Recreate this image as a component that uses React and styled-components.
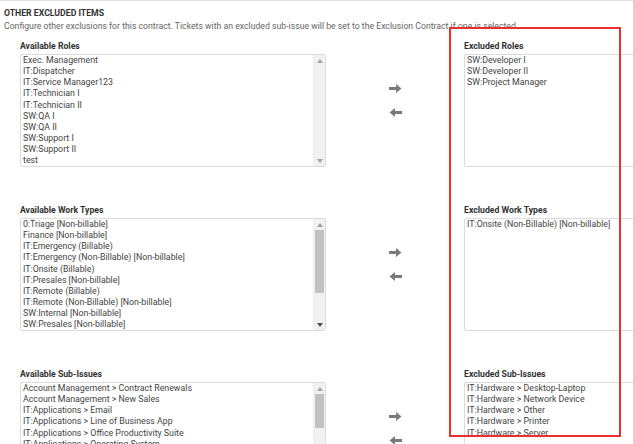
import React from 'react';
import styled, { createGlobalStyle } from 'styled-components';

const GlobalStyle = createGlobalStyle`
  body {
    margin: 0;
    background: #fff;
    font-family: Roboto, "Liberation Sans", sans-serif;
    overflow: hidden;
  }
`;

const Page = styled.div`
  position: relative;
  width: 633px;
  height: 444px;
  overflow: hidden;
  border-top: 1px solid #e2e2e2;
  box-sizing: border-box;
`;

const Header = styled.div`
  padding: 7px 4px 0;
`;

const Title = styled.div`
  font-size: 8.7px;
  font-weight: 700;
  color: #333;
  line-height: 11px;
`;

const Desc = styled.div`
  font-size: 8.7px;
  color: #666;
  line-height: 11px;
  margin-top: 2px;
  white-space: nowrap;
`;

const Sections = styled.div`
  display: flex;
  flex-direction: column;
  gap: 38px;
  padding: 9px 0 0 20px;
`;

const Row = styled.div`
  display: grid;
  grid-template-columns: 306px 138px 306px;
`;

const Field = styled.div`
  display: flex;
  flex-direction: column;
`;

const Label = styled.div`
  font-size: 8.7px;
  font-weight: 700;
  color: #333;
  line-height: 11px;
  margin-bottom: 2px;
`;

const Box = styled.div`
  display: flex;
  height: 113px;
  border: 1px solid #dcdcdc;
  border-radius: 2px;
  box-sizing: border-box;
  background: #fff;
  overflow: hidden;
`;

const Items = styled.div`
  flex: 1;
  padding: 0 2px;
  font-size: 8.8px;
  line-height: 11.15px;
  color: #444;
  white-space: nowrap;
  overflow: hidden;
`;

const Track = styled.div`
  width: 11px;
  display: flex;
  flex-direction: column;
  background: #f1f1f1;
  border-left: 1px solid #ececec;
`;

const ScrollBtn = styled.div`
  height: 11px;
  display: flex;
  align-items: center;
  justify-content: center;
  color: ${p => (p.$active ? '#505050' : '#a3a3a3')};
`;

const ThumbArea = styled.div`
  flex: 1;
  display: flex;
  flex-direction: column;
`;

const Thumb = styled.div`
  margin: 0 1px;
  background: #c1c1c1;
`;

const Arrows = styled.div`
  display: flex;
  flex-direction: column;
  align-items: center;
  gap: 15px;
  padding-top: 43px;
`;

const Highlight = styled.div`
  position: absolute;
  left: 449px;
  top: 26px;
  width: 172px;
  height: 410px;
  border: 2px solid #e8312f;
  box-sizing: border-box;
  pointer-events: none;
`;

const Tri = ({ up }) => (
  <svg width="6" height="4" viewBox="0 0 6 4">
    <path d={up ? 'M0 4 L3 0 L6 4 Z' : 'M0 0 L3 4 L6 0 Z'} fill="currentColor" />
  </svg>
);

const Arrow = ({ left }) => (
  <svg width="13" height="9" viewBox="0 0 13 9">
    <path
      d="M0 3 H7 V0 L12.5 4.5 L7 9 V6 H0 Z"
      fill="#7a7a7a"
      transform={left ? 'translate(13 0) scale(-1 1)' : undefined}
    />
  </svg>
);

const Scrollbar = ({ thumb }) => (
  <Track>
    <ScrollBtn $active={false}><Tri up /></ScrollBtn>
    <ThumbArea>{thumb > 0 && <Thumb style={{ height: thumb }} />}</ThumbArea>
    <ScrollBtn $active={thumb > 0}><Tri /></ScrollBtn>
  </Track>
);

const List = ({ items, scroll, thumb }) => (
  <Box>
    <Items>
      {items.map(i => (
        <div key={i}>{i}</div>
      ))}
    </Items>
    {scroll && <Scrollbar thumb={thumb} />}
  </Box>
);

const sections = [
  {
    left: 'Available Roles',
    right: 'Excluded Roles',
    available: [
      'Exec. Management',
      'IT:Dispatcher',
      'IT:Service Manager123',
      'IT:Technician I',
      'IT:Technician II',
      'SW:QA I',
      'SW:QA II',
      'SW:Support I',
      'SW:Support II',
      'test',
    ],
    excluded: ['SW:Developer I', 'SW:Developer II', 'SW:Project Manager'],
    thumb: 0,
  },
  {
    left: 'Available Work Types',
    right: 'Excluded Work Types',
    available: [
      '0:Triage [Non-billable]',
      'Finance [Non-billable]',
      'IT:Emergency (Billable)',
      'IT:Emergency (Non-Billable) [Non-billable]',
      'IT:Onsite (Billable)',
      'IT:Presales [Non-billable]',
      'IT:Remote (Billable)',
      'IT:Remote (Non-Billable) [Non-billable]',
      'SW:Internal [Non-billable]',
      'SW:Presales [Non-billable]',
    ],
    excluded: ['IT:Onsite (Non-Billable) [Non-billable]'],
    thumb: 63,
  },
  {
    left: 'Available Sub-Issues',
    right: 'Excluded Sub-Issues',
    available: [
      'Account Management > Contract Renewals',
      'Account Management > New Sales',
      'IT:Applications > Email',
      'IT:Applications > Line of Business App',
      'IT:Applications > Office Productivity Suite',
      'IT:Applications > Operating System',
      'IT:Applications > Other',
      'IT:Applications > Security',
      'IT:Applications > Web Browser',
      'IT:Hardware > Mobile Device',
    ],
    excluded: [
      'IT:Hardware > Desktop-Laptop',
      'IT:Hardware > Network Device',
      'IT:Hardware > Other',
      'IT:Hardware > Printer',
      'IT:Hardware > Server',
    ],
    thumb: 34,
  },
];

export default function App() {
  return (
    <Page>
      <GlobalStyle />
      <Header>
        <Title>OTHER EXCLUDED ITEMS</Title>
        <Desc>
          Configure other exclusions for this contract. Tickets with an excluded sub-issue will be set to the
          Exclusion Contract if one is selected.
        </Desc>
      </Header>
      <Sections>
        {sections.map(s => (
          <Row key={s.left}>
            <Field>
              <Label>{s.left}</Label>
              <List items={s.available} scroll thumb={s.thumb} />
            </Field>
            <Arrows>
              <Arrow />
              <Arrow left />
            </Arrows>
            <Field>
              <Label>{s.right}</Label>
              <List items={s.excluded} />
            </Field>
          </Row>
        ))}
      </Sections>
      <Highlight />
    </Page>
  );
}
